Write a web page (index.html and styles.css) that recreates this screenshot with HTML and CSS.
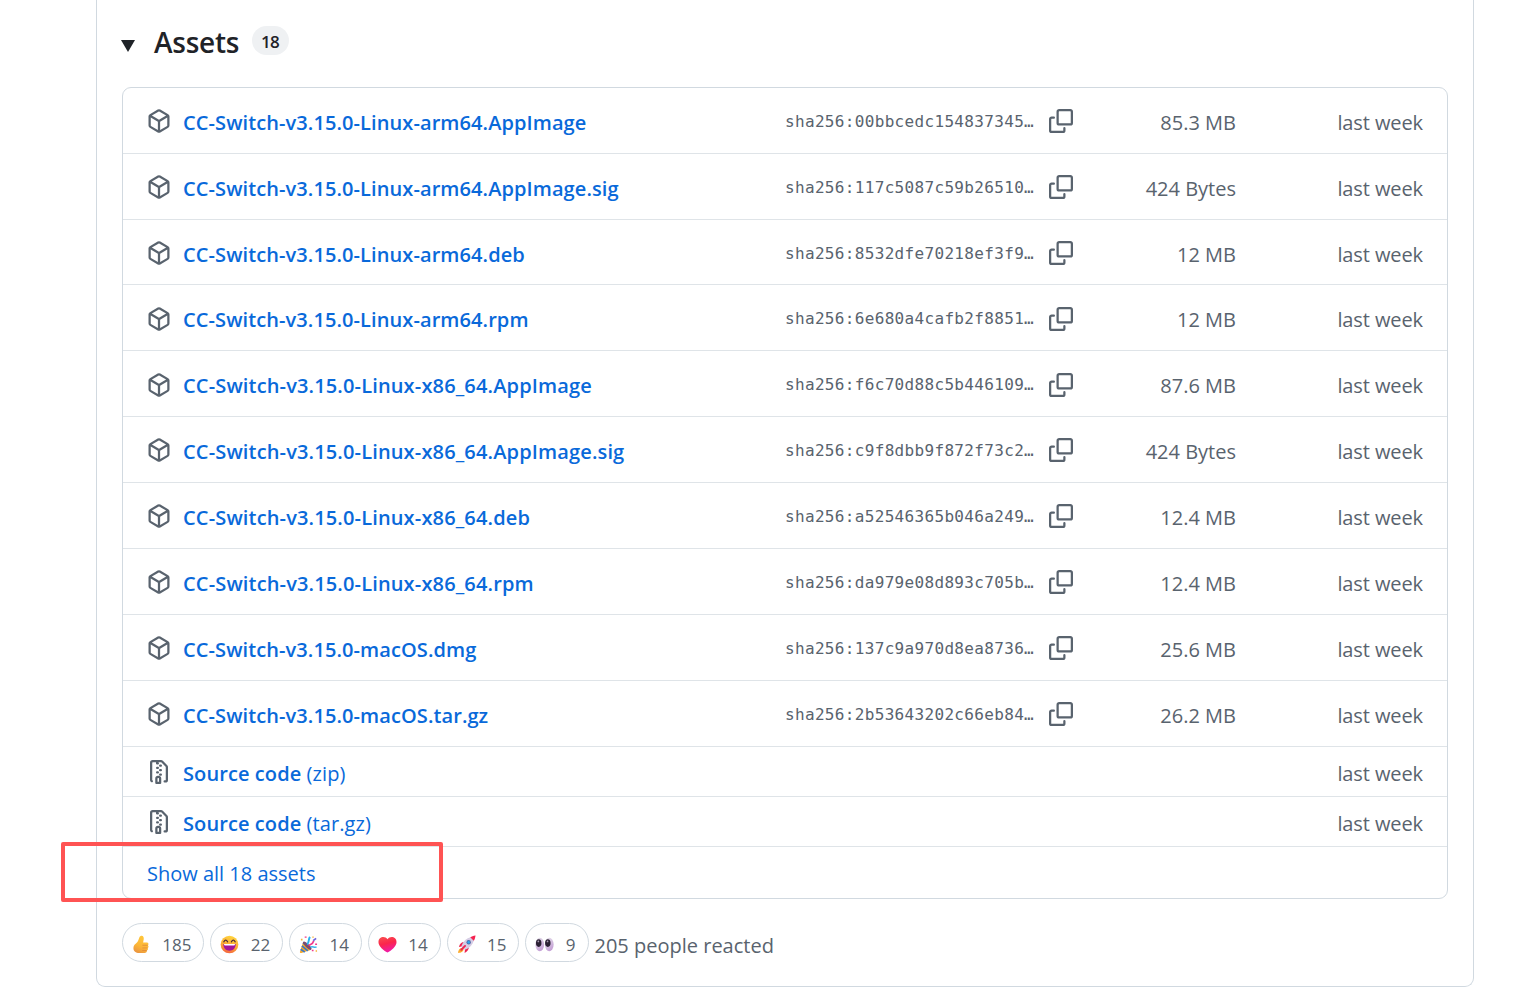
FILE: index.html
```html
<!DOCTYPE html>
<html lang="en">
<head>
  <meta charset="UTF-8" />
  <meta name="viewport" content="width=device-width, initial-scale=1.0"/>
  <title>Release assets</title>
  <link rel="stylesheet" href="styles.css">
</head>
<body>

  <!-- Shared icons -->
  <svg class="sprite" width="0" height="0">
    <symbol id="package" viewBox="0 0 16 16">
      <path d="m8.878.392 5.25 3.045c.54.314.872.89.872 1.514v6.098a1.75 1.75 0 0 1-.872 1.514l-5.25 3.045a1.75 1.75 0 0 1-1.756 0l-5.25-3.045A1.75 1.75 0 0 1 1 11.049V4.951c0-.624.332-1.201.872-1.514L7.122.392a1.75 1.75 0 0 1 1.756 0ZM7.875 1.69l-4.63 2.685L8 7.133l4.755-2.758-4.63-2.685a.248.248 0 0 0-.25 0ZM2.5 5.677v5.372c0 .09.047.171.125.216l4.625 2.683V8.432Zm6.25 8.271 4.625-2.683a.25.25 0 0 0 .125-.216V5.677L8.75 8.432Z"/>
    </symbol>
    <symbol id="copy" viewBox="0 0 16 16">
      <path d="M0 6.75C0 5.784.784 5 1.75 5h1.5a.75.75 0 0 1 0 1.5h-1.5a.25.25 0 0 0-.25.25v7.5c0 .138.112.25.25.25h7.5a.25.25 0 0 0 .25-.25v-1.5a.75.75 0 0 1 1.5 0v1.5A1.75 1.75 0 0 1 9.25 16h-7.5A1.75 1.75 0 0 1 0 14.25Z"/>
      <path d="M5 1.75C5 .784 5.784 0 6.75 0h7.5C15.216 0 16 .784 16 1.75v7.5A1.75 1.75 0 0 1 14.25 11h-7.5A1.75 1.75 0 0 1 5 9.25Zm1.75-.25a.25.25 0 0 0-.25.25v7.5c0 .138.112.25.25.25h7.5a.25.25 0 0 0 .25-.25v-7.5a.25.25 0 0 0-.25-.25Z"/>
    </symbol>
    <symbol id="file-zip" viewBox="0 0 16 16">
      <path d="M3.5 1.75v11.5c0 .09.048.173.126.217a.75.75 0 0 1-.752 1.298A1.748 1.748 0 0 1 2 13.25V1.75C2 .784 2.784 0 3.75 0h5.586c.464 0 .909.185 1.237.513l2.914 2.914c.329.328.513.773.513 1.237v8.586A1.75 1.75 0 0 1 12.25 15h-.5a.75.75 0 0 1 0-1.5h.5a.25.25 0 0 0 .25-.25V4.664a.25.25 0 0 0-.073-.177L9.513 1.573a.25.25 0 0 0-.177-.073H7.25a.75.75 0 0 1 0 1.5h-.5a.75.75 0 0 1-.75-.75V1.5H3.75a.25.25 0 0 0-.25.25Zm3.75 8.75h.5c.966 0 1.75.784 1.75 1.75v3a.75.75 0 0 1-.75.75h-2.5a.75.75 0 0 1-.75-.75v-3c0-.966.784-1.75 1.75-1.75ZM6 5.25a.75.75 0 0 1 .75-.75h.5a.75.75 0 0 1 0 1.5h-.5A.75.75 0 0 1 6 5.25Zm.75 2.25h.5a.75.75 0 0 1 0 1.5h-.5a.75.75 0 0 1 0-1.5ZM8 6.75A.75.75 0 0 1 8.75 6h.5a.75.75 0 0 1 0 1.5h-.5A.75.75 0 0 1 8 6.75ZM8.75 3h.5a.75.75 0 0 1 0 1.5h-.5a.75.75 0 0 1 0-1.5ZM8 9.75A.75.75 0 0 1 8.75 9h.5a.75.75 0 0 1 0 1.5h-.5A.75.75 0 0 1 8 9.75Zm-1 2.5v2.25h1v-2.25a.25.25 0 0 0-.25-.25h-.5a.25.25 0 0 0-.25.25Z"/>
    </symbol>
  </svg>

  <div class="release">
    <div class="heading">
      <svg class="arrow" viewBox="0 0 14 12"><path d="M0 0h14L7 12z"/></svg>
      <h3>Assets</h3>
      <span class="counter">18</span>
    </div>

    <!-- Asset list -->
    <ul class="assets">
      <li class="row">
        <svg class="icon"><use href="#package"/></svg>
        <a class="name">CC-Switch-v3.15.0-Linux-arm64.AppImage</a>
        <span class="sha">sha256:00bbcedc154837345…</span>
        <svg class="icon copy"><use href="#copy"/></svg>
        <span class="size">85.3 MB</span>
        <span class="date">last week</span>
      </li>
      <li class="row">
        <svg class="icon"><use href="#package"/></svg>
        <a class="name">CC-Switch-v3.15.0-Linux-arm64.AppImage.sig</a>
        <span class="sha">sha256:117c5087c59b26510…</span>
        <svg class="icon copy"><use href="#copy"/></svg>
        <span class="size">424 Bytes</span>
        <span class="date">last week</span>
      </li>
      <li class="row">
        <svg class="icon"><use href="#package"/></svg>
        <a class="name">CC-Switch-v3.15.0-Linux-arm64.deb</a>
        <span class="sha">sha256:8532dfe70218ef3f9…</span>
        <svg class="icon copy"><use href="#copy"/></svg>
        <span class="size">12 MB</span>
        <span class="date">last week</span>
      </li>
      <li class="row">
        <svg class="icon"><use href="#package"/></svg>
        <a class="name">CC-Switch-v3.15.0-Linux-arm64.rpm</a>
        <span class="sha">sha256:6e680a4cafb2f8851…</span>
        <svg class="icon copy"><use href="#copy"/></svg>
        <span class="size">12 MB</span>
        <span class="date">last week</span>
      </li>
      <li class="row">
        <svg class="icon"><use href="#package"/></svg>
        <a class="name x86">CC-Switch-v3.15.0-Linux-x86_64.AppImage</a>
        <span class="sha">sha256:f6c70d88c5b446109…</span>
        <svg class="icon copy"><use href="#copy"/></svg>
        <span class="size">87.6 MB</span>
        <span class="date">last week</span>
      </li>
      <li class="row">
        <svg class="icon"><use href="#package"/></svg>
        <a class="name x86">CC-Switch-v3.15.0-Linux-x86_64.AppImage.sig</a>
        <span class="sha">sha256:c9f8dbb9f872f73c2…</span>
        <svg class="icon copy"><use href="#copy"/></svg>
        <span class="size">424 Bytes</span>
        <span class="date">last week</span>
      </li>
      <li class="row">
        <svg class="icon"><use href="#package"/></svg>
        <a class="name x86">CC-Switch-v3.15.0-Linux-x86_64.deb</a>
        <span class="sha">sha256:a52546365b046a249…</span>
        <svg class="icon copy"><use href="#copy"/></svg>
        <span class="size">12.4 MB</span>
        <span class="date">last week</span>
      </li>
      <li class="row">
        <svg class="icon"><use href="#package"/></svg>
        <a class="name x86">CC-Switch-v3.15.0-Linux-x86_64.rpm</a>
        <span class="sha">sha256:da979e08d893c705b…</span>
        <svg class="icon copy"><use href="#copy"/></svg>
        <span class="size">12.4 MB</span>
        <span class="date">last week</span>
      </li>
      <li class="row">
        <svg class="icon"><use href="#package"/></svg>
        <a class="name">CC-Switch-v3.15.0-macOS.dmg</a>
        <span class="sha">sha256:137c9a970d8ea8736…</span>
        <svg class="icon copy"><use href="#copy"/></svg>
        <span class="size">25.6 MB</span>
        <span class="date">last week</span>
      </li>
      <li class="row">
        <svg class="icon"><use href="#package"/></svg>
        <a class="name">CC-Switch-v3.15.0-macOS.tar.gz</a>
        <span class="sha">sha256:2b53643202c66eb84…</span>
        <svg class="icon copy"><use href="#copy"/></svg>
        <span class="size">26.2 MB</span>
        <span class="date">last week</span>
      </li>
      <li class="row source">
        <svg class="icon"><use href="#file-zip"/></svg>
        <a class="name"><b>Source code</b> <span class="ext">(zip)</span></a>
        <span class="date">last week</span>
      </li>
      <li class="row source">
        <svg class="icon"><use href="#file-zip"/></svg>
        <a class="name"><b>Source code</b> <span class="ext">(tar.gz)</span></a>
        <span class="date">last week</span>
      </li>
      <li class="row more">
        <a class="show-all">Show all 18 assets</a>
      </li>
    </ul>

    <!-- Reactions -->
    <div class="reactions">
      <button class="reaction">
        <svg class="emoji" viewBox="0 0 20 20">
          <defs><linearGradient id="thumb" x1=".7" y1="0" x2=".3" y2="1"><stop offset="0" stop-color="#ffc83a"/><stop offset=".6" stop-color="#fcb637"/><stop offset="1" stop-color="#ea9540"/></linearGradient></defs>
          <path d="M9.500.7c2.600-.3 3.200 2 2.800 4L11.700 8h3.800c2.200 0 2.300 2.200 1.200 2.900 1 .8.900 2.300-.2 2.800.7.900.3 2.300-.8 2.600.2 1.500-.8 2.700-2.500 2.700H7.500C4 19 1.500 17 1.500 13.600c0-2.700 1.800-4.200 3.700-5.800C7.500 5.800 7 1.500 9.500.7z" fill="url(#thumb)"/>
          <path d="M11 10.800h5.500M11 13.600h5.200M10.800 16.300h4.700" stroke="#e08a3a" stroke-width=".9" fill="none"/>
        </svg>
        185
      </button>
      <button class="reaction">
        <svg class="emoji" viewBox="0 0 20 20">
          <defs><linearGradient id="face" x1=".6" y1="0" x2=".3" y2="1"><stop offset="0" stop-color="#ffd53e"/><stop offset=".55" stop-color="#fca834"/><stop offset="1" stop-color="#f4603f"/></linearGradient></defs>
          <circle cx="10" cy="10" r="9.300" fill="url(#face)"/>
          <path d="M4 7.200Q6 3.800 8 7.200M12 7.200Q14 3.800 16 7.200" stroke="#4b2b3a" stroke-width="1.300" fill="none" stroke-linecap="round"/>
          <path d="M3.500 9.500h13c0 4.500-2.800 7-6.500 7s-6.500-2.500-6.500-7z" fill="#a3149b"/>
          <path d="M4.200 9.500h11.600c0 1.300-.6 1.600-1.800 1.600H6c-1.200 0-1.800-.3-1.800-1.600z" fill="#fff"/>
        </svg>
        22
      </button>
      <button class="reaction">
        <svg class="emoji" viewBox="0 0 20 20">
          <path d="M4.500 7 1 17.500c-.2 1 .5 1.700 1.500 1.400L13 15.500z" fill="#f7a928"/>
          <path d="m3 11.500 6.300 5.200M1.800 15l4.300 3M4.200 8l8.300 7.200" stroke="#3b78c9" stroke-width="1.800"/>
          <ellipse cx="8.700" cy="11.200" rx="1.900" ry="5.800" transform="rotate(-46 8.700 11.200)" fill="#7a4b70"/>
          <path d="M8.500 10C11 8 9.500 5 11.500 2" stroke="#29b2ee" stroke-width="2" fill="none"/>
          <path d="M10.500 11.500c1.500-3 3.500-.5 5-5.500" stroke="#f0398c" stroke-width="1.800" fill="none"/>
          <path d="M12 12.800c2.500-1.500 4 1 6.500-.3" stroke="#38b5ed" stroke-width="1.700" fill="none"/>
          <path d="M6 1.500h2V3H6zM17 9h2v1.600h-2zM13.500 15.500h1.800V17h-1.800z" fill="#f0398c"/>
          <path d="M2 4h1.700v1.700H2zM14 1.500h1.500V3H14zM17.500 16H19v1.500h-1.500z" fill="#f6b13a"/>
          <path d="m15 6 3-2.500" stroke="#6c60d9" stroke-width="1.800"/>
        </svg>
        14
      </button>
      <button class="reaction">
        <svg class="emoji" viewBox="0 0 20 20">
          <defs><linearGradient id="heart" x1="0" y1="0" x2=".3" y2="1"><stop offset="0" stop-color="#f9514f"/><stop offset=".5" stop-color="#fb264c"/><stop offset="1" stop-color="#f01ca4"/></linearGradient></defs>
          <path d="M10 4.500C7.500.6.500 1.500.5 7.500c0 4.500 5.500 8.500 9.500 11 4-2.500 9.500-6.500 9.500-11 0-6-7-6.900-9.500-3z" fill="url(#heart)"/>
        </svg>
        14
      </button>
      <button class="reaction">
        <svg class="emoji" viewBox="0 0 20 20">
          <path d="M5.500 13.500 7 15c-.5 3-3 3.500-6 4 .2-2.500 1.500-5.200 4.500-5.500z" fill="#fbab2e"/>
          <path d="M8 7.500c-3-.2-5 2-6 5l4-.7zM12.500 12c.2 3-1.500 5-4.500 7l.5-5z" fill="#ee2452"/>
          <path d="M4.500 12C6.500 6 11 2 18.500 1.500 18 9 14 13.500 8 15.500z" fill="#d6cce4"/>
          <path d="M14 2.400C15.500 1.500 17 1 19.500.5c-.3 2.500-.8 4-1.900 5.500z" fill="#f52350"/>
          <circle cx="12.300" cy="7.600" r="2.300" fill="#526da9"/>
          <circle cx="12.300" cy="7.600" r="1.300" fill="#2da8ed"/>
          <path d="m4.500 15.500 4-4" stroke="#ed2450" stroke-width="2" stroke-linecap="round"/>
        </svg>
        15
      </button>
      <button class="reaction">
        <svg class="emoji" viewBox="0 0 20 20">
          <defs><linearGradient id="eye" x1=".2" y1="0" x2=".7" y2="1"><stop offset="0" stop-color="#e5dfea"/><stop offset="1" stop-color="#c29bd4"/></linearGradient></defs>
          <ellipse cx="5" cy="10" rx="4.600" ry="7.200" fill="url(#eye)"/>
          <ellipse cx="15" cy="10" rx="4.600" ry="7.200" fill="url(#eye)"/>
          <ellipse cx="3.900" cy="8.500" rx="2.900" ry="4" fill="#2b2033"/>
          <ellipse cx="13.500" cy="8.500" rx="2.900" ry="4" fill="#2b2033"/>
          <circle cx="3.500" cy="6.800" r=".9" fill="#a99bb3"/>
          <circle cx="13.200" cy="6.800" r=".9" fill="#a99bb3"/>
        </svg>
        9
      </button>
      <span class="people">205 people reacted</span>
    </div>
  </div>

  <!-- Red marker around the "show all" link -->
  <div class="marker"></div>

</body>
</html>
```

FILE: styles.css
```css
* {
  box-sizing: border-box;
}

body {
  font-family: "Open Sans", "Noto Sans", sans-serif;
  font-size: 20px;
  margin: 0;
  background: #fff;
  color: #59636e;
  position: relative;
}

.sprite {
  display: block;
}

.release {
  width: 1378px;
  height: 987px;
  margin-left: 96px;
  padding: 24px 25px 0;
  border: 1px solid #d1d9e0;
  border-top: none;
  border-radius: 0 0 9px 9px;
}

/* Heading */
.heading {
  display: flex;
  height: 63px;
}

.arrow {
  width: 14px;
  height: 12px;
  margin: 16px 18px 0 -1px;
  fill: #1f2328;
}

h3 {
  margin: 0 0 0 1px;
  font-size: 28px;
  font-weight: 600;
  line-height: 36px;
  letter-spacing: -0.25px;
  color: #1f2328;
}

.counter {
  width: 37px;
  height: 29px;
  margin: 2px 0 0 12.5px;
  border-radius: 15px;
  background: #eff1f3;
  color: #1f2328;
  font-size: 17px;
  font-weight: 600;
  line-height: 31px;
  letter-spacing: -0.5px;
  text-align: center;
}

/* Asset list */
.assets {
  list-style: none;
  margin: 0;
  padding: 0;
  height: 812px;
  border: 1px solid #d1d9e0;
  border-radius: 9px;
}

.row {
  display: flex;
  align-items: flex-start;
  height: 65.88px;
  padding: 20px 24px 0;
  border-top: 1px solid #dfe4e8;
  line-height: 30px;
  white-space: nowrap;
}

.row:first-child {
  height: 64.7px;
  border-top: none;
}

.icon {
  flex: none;
  width: 24px;
  height: 24px;
  margin-top: 1.2px;
  fill: #59636e;
}

.name {
  width: 602px;
  margin-left: 12px;
  color: #0969da;
  font-weight: 600;
  letter-spacing: 0.09px;
}

.x86 {
  letter-spacing: 0.15px;
}

.sha {
  width: 250px;
  font-family: "DejaVu Sans Mono", monospace;
  font-size: 16px;
  letter-spacing: 0.33px;
  line-height: 28px;
}

.copy {
  margin-left: 14px;
}

.size {
  width: 163px;
  text-align: right;
}

.date {
  margin-left: auto;
  letter-spacing: -0.1px;
  text-align: right;
}

.source {
  height: 50px;
  padding-top: 12px;
}

.source b {
  font-weight: 600;
}

.ext,
.show-all {
  color: #0969da;
  font-weight: 400;
}

.more {
  height: 51px;
  padding-top: 12px;
}

/* Reactions */
.reactions {
  display: flex;
  gap: 6px;
  margin-top: 24px;
}

.reaction {
  display: flex;
  align-items: center;
  height: 39px;
  padding: 4px 12px 0 9px;
  border: 1px solid #d1d9e0;
  border-radius: 20px;
  background: #fff;
  color: #59636e;
  font-family: inherit;
  font-size: 17px;
}

.emoji {
  width: 19px;
  height: 19px;
  margin-right: 11.3px;
}

.people {
  line-height: 45px;
}

.marker {
  position: absolute;
  left: 61px;
  top: 842px;
  width: 382px;
  height: 60px;
  border: 4px solid #ff5353;
  border-radius: 2px;
}
```
